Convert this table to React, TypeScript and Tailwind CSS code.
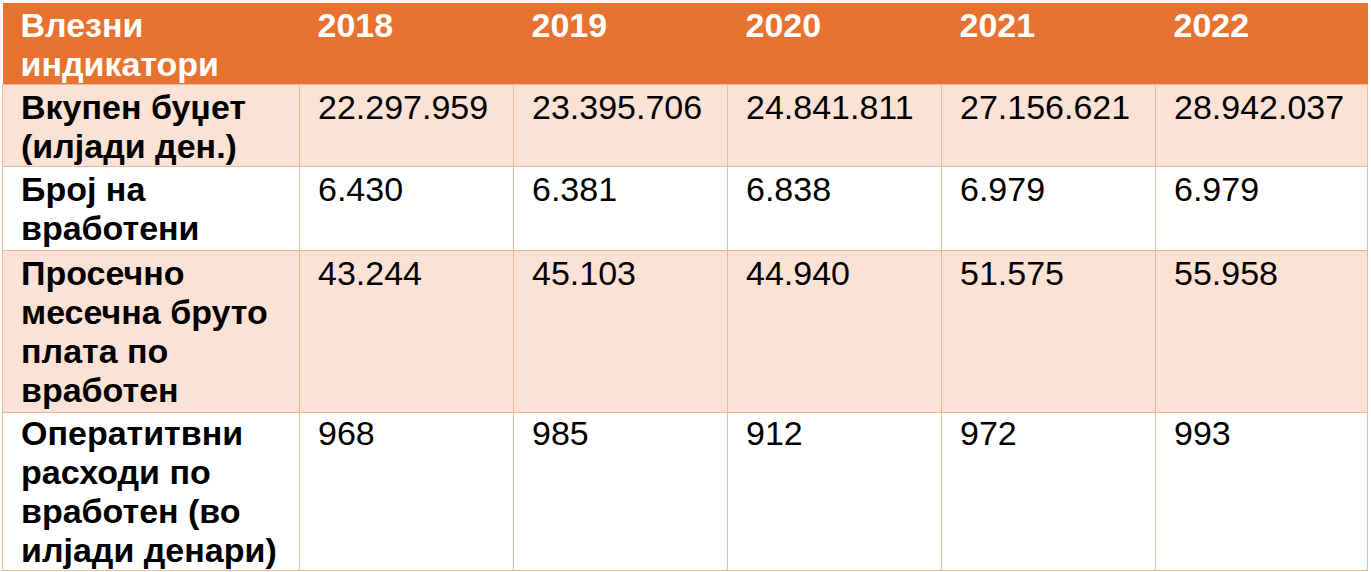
const years = ['2018', '2019', '2020', '2021', '2022'];

const rows = [
  {
    label: ['Вкупен буџет', '(илјади ден.)'],
    values: ['22.297.959', '23.395.706', '24.841.811', '27.156.621', '28.942.037'],
    shade: true,
    height: 'h-[81px]',
    pad: 'pt-[3px]',
  },
  {
    label: ['Број на', 'вработени'],
    values: ['6.430', '6.381', '6.838', '6.979', '6.979'],
    shade: false,
    height: 'h-[84px]',
    pad: 'pt-[3px]',
  },
  {
    label: ['Просечно', 'месечна бруто', 'плата по', 'вработен'],
    values: ['43.244', '45.103', '44.940', '51.575', '55.958'],
    shade: true,
    height: 'h-[162px]',
    pad: 'pt-[3px]',
  },
  {
    label: ['Оператитвни', 'расходи по', 'вработен (во', 'илјади денари)'],
    values: ['968', '985', '912', '972', '993'],
    shade: false,
    height: 'h-[157px]',
    pad: 'pt-[1px]',
  },
];

export default function App() {
  return (
    <div className="h-[572px] w-[1371px] overflow-hidden bg-white pl-[2px] pt-[3px] font-['Liberation_Sans',Arial,sans-serif] text-[34px] leading-[39px] text-black">
      <table className="w-[1365px] table-fixed border-collapse">
        <colgroup>
          <col className="w-[297px]" />
          <col className="w-[214px]" />
          <col className="w-[214px]" />
          <col className="w-[214px]" />
          <col className="w-[214px]" />
          <col className="w-[212px]" />
        </colgroup>
        <thead>
          <tr className="h-[80px] bg-[#E8722F] text-white">
            <th className="px-[18px] pt-[3px] text-left align-top font-bold">
              Влезни
              <br />
              индикатори
            </th>
            {years.map((y) => (
              <th key={y} className="px-[18px] pt-[3px] text-left align-top font-bold">
                {y}
              </th>
            ))}
          </tr>
        </thead>
        <tbody>
          {rows.map((r, i) => (
            <tr key={i} className={`${r.height} ${r.shade ? 'bg-[#FBE2D5]' : 'bg-white'}`}>
              <td className={`border border-[#F1B894] px-[18px] ${r.pad} align-top font-bold`}>
                {r.label.map((l, j) => (
                  <div key={j}>{l}</div>
                ))}
              </td>
              {r.values.map((v, j) => (
                <td key={j} className={`border border-[#F1B894] px-[18px] ${r.pad} align-top`}>
                  {v}
                </td>
              ))}
            </tr>
          ))}
        </tbody>
      </table>
    </div>
  );
}
